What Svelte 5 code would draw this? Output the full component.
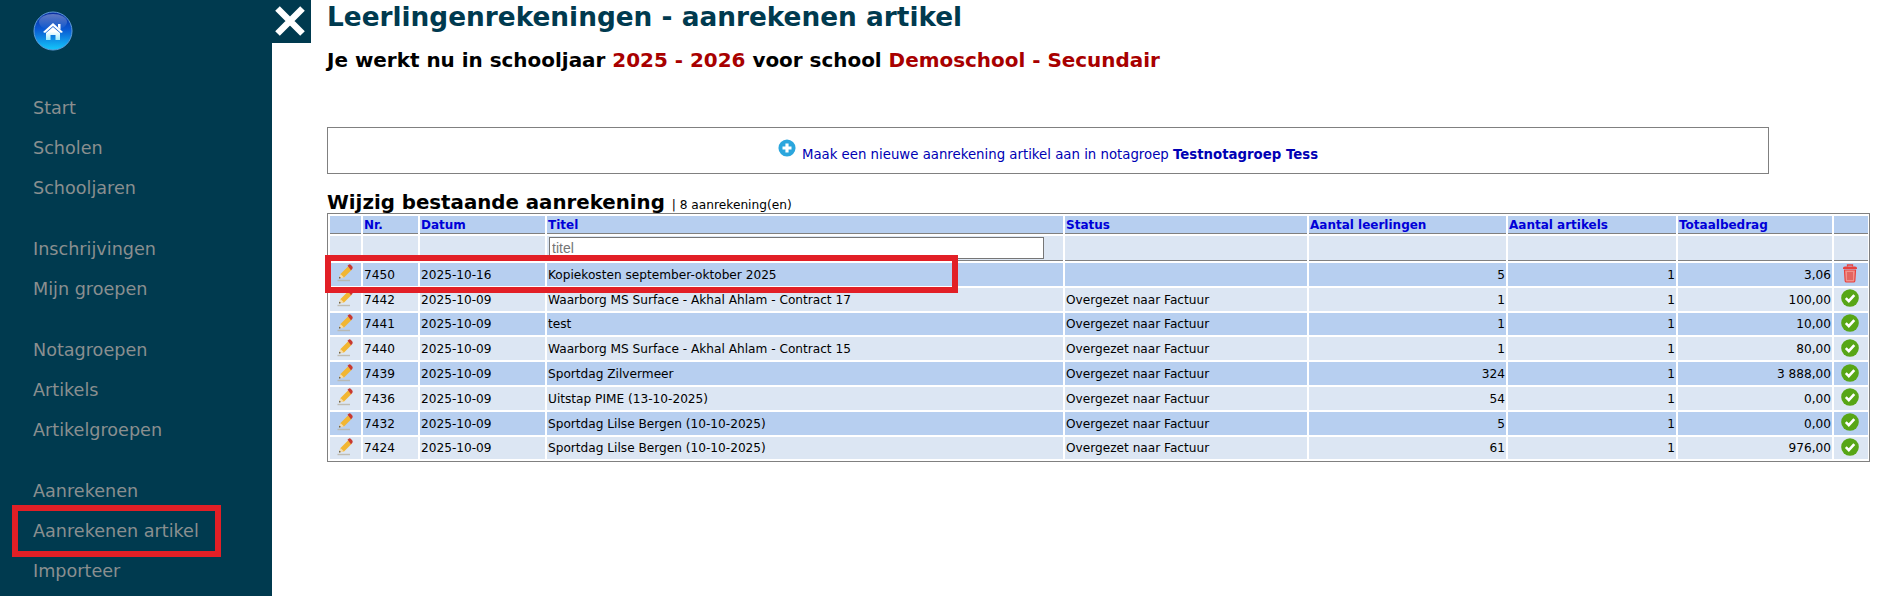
<script>
  const menu = [
    ['Start', 'Scholen', 'Schooljaren'],
    ['Inschrijvingen', 'Mijn groepen'],
    ['Notagroepen', 'Artikels', 'Artikelgroepen'],
    ['Aanrekenen', 'Aanrekenen artikel', 'Importeer']
  ];
  const columns = ['', 'Nr.', 'Datum', 'Titel', 'Status', 'Aantal leerlingen', 'Aantal artikels', 'Totaalbedrag', ''];
  const done = 'Overgezet naar Factuur';
  const rows = [
    ['7450', '2025-10-16', 'Kopiekosten september-oktober 2025', '', '5', '1', '3,06', 'del'],
    ['7442', '2025-10-09', 'Waarborg MS Surface - Akhal Ahlam - Contract 17', done, '1', '1', '100,00', 'ok'],
    ['7441', '2025-10-09', 'test', done, '1', '1', '10,00', 'ok'],
    ['7440', '2025-10-09', 'Waarborg MS Surface - Akhal Ahlam - Contract 15', done, '1', '1', '80,00', 'ok'],
    ['7439', '2025-10-09', 'Sportdag Zilvermeer', done, '324', '1', '3 888,00', 'ok'],
    ['7436', '2025-10-09', 'Uitstap PIME (13-10-2025)', done, '54', '1', '0,00', 'ok'],
    ['7432', '2025-10-09', 'Sportdag Lilse Bergen (10-10-2025)', done, '5', '1', '0,00', 'ok'],
    ['7424', '2025-10-09', 'Sportdag Lilse Bergen (10-10-2025)', done, '61', '1', '976,00', 'ok']
  ];
</script>

<div class="page">
  <nav class="side">
    <svg class="home" viewBox="0 0 40 40" width="40" height="40" aria-hidden="true">
      <defs>
        <linearGradient id="orb" x1="0" y1="0" x2="0" y2="1">
          <stop offset="0" stop-color="#0b2c9c" />
          <stop offset="0.45" stop-color="#0a58d2" />
          <stop offset="1" stop-color="#14c8fb" />
        </linearGradient>
        <linearGradient id="gloss" x1="0" y1="0" x2="0" y2="1">
          <stop offset="0" stop-color="#fff" stop-opacity=".35" />
          <stop offset="1" stop-color="#fff" stop-opacity="0" />
        </linearGradient>
        <linearGradient id="hs" x1="0" y1="0" x2="0" y2="1">
          <stop offset="0.5" stop-color="#fff" />
          <stop offset="1" stop-color="#9ceafc" />
        </linearGradient>
      </defs>
      <circle cx="20" cy="20" r="19" fill="url(#orb)" stroke="#5f9cdc" stroke-width="1" />
      <ellipse cx="20" cy="11" rx="14" ry="8" fill="url(#gloss)" />
      <path d="M20 12 L30 21 L28 22 L20 15 L12 22 L10 21 Z M25 13 h2.500 v5.500 l-2.500 -2.200 Z M13 22 L20 16 L27 22 V29 H22.500 V24 H17.500 V29 H13 Z" fill="url(#hs)" />
    </svg>
    {#each menu as group}
      <ul>
        {#each group as item}
          <li>{item}</li>
        {/each}
      </ul>
    {/each}
    <div class="mark side-mark"></div>
  </nav>

  <div class="close">
    <svg viewBox="0 0 39 43" width="39" height="43" aria-hidden="true">
      <path d="M5.500 8.500 L30.500 33.500 M30.500 8.500 L5.500 33.500" stroke="#fff" stroke-width="6.500" fill="none" />
    </svg>
  </div>

  <main>
    <h1>Leerlingenrekeningen - aanrekenen artikel</h1>
    <h2>Je werkt nu in schooljaar <em>2025 - 2026</em> voor school <em>Demoschool - Secundair</em></h2>

    <div class="newbox">
      <svg class="plus" viewBox="0 0 20 20" width="18" height="18" aria-hidden="true">
        <circle cx="10" cy="10" r="9.500" fill="#2ba6dd" />
        <path d="M10 5 V15 M5 10 H15" stroke="#fff" stroke-width="3.500" />
      </svg>
      <a href="#new">Maak een nieuwe aanrekening artikel aan in notagroep <b>Testnotagroep Tess</b></a>
    </div>

    <h3>Wijzig bestaande aanrekening <small>| 8 aanrekening(en)</small></h3>

    <div class="tablewrap">
      <table>
        <colgroup>
          <col class="c0" /><col class="c1" /><col class="c2" /><col class="c3" /><col class="c4" />
          <col class="c5" /><col class="c6" /><col class="c7" /><col class="c8" />
        </colgroup>
        <thead>
          <tr>
            {#each columns as c}<th>{c}</th>{/each}
          </tr>
          <tr class="filter">
            <td></td><td></td><td></td>
            <td><input placeholder="titel" /></td>
            <td></td><td></td><td></td><td></td><td></td>
          </tr>
        </thead>
        <tbody>
          {#each rows as r, i}
            <tr class:odd={i % 2 === 0}>
              <td class="ic">
                <svg viewBox="0 0 20 20" width="20" height="20" aria-hidden="true">
                  <path d="M2.500 17.500 H15" stroke="#b9b4a4" stroke-width="1.400" opacity=".8" />
                  <path d="M4 15.500 L5.500 11 L13 3.500 L16.500 7 L9 14.500 Z" fill="#f2b632" />
                  <path d="M12.500 2.800 L14 1.500 Q15 1 16 2 L17.500 3.800 Q18 5 17.200 6 L16 7.300 Z" fill="#c8392f" />
                  <path d="M4 15.500 L5.500 11 L9 14.500 Z" fill="#f3dcb0" />
                  <path d="M4 15.500 L4.500 13.800 L5.900 15 Z" fill="#333" />
                </svg>
              </td>
              <td>{r[0]}</td>
              <td>{r[1]}</td>
              <td>{r[2]}</td>
              <td>{r[3]}</td>
              <td class="num">{r[4]}</td>
              <td class="num">{r[5]}</td>
              <td class="num">{r[6]}</td>
              <td class="ic act">
                {#if r[7] === 'del'}
                  <svg viewBox="0 0 20 20" width="20" height="20" aria-hidden="true">
                    <path d="M7.500 3.500 V2 H12.500 V3.500" fill="none" stroke="#e8403c" stroke-width="1.300" />
                    <path d="M3 5 Q3 3.500 5 3.500 H15 Q17 3.500 17 5 V6 H3 Z" fill="#e8403c" />
                    <path d="M4.500 7 H15.500 L14.800 18 Q14.700 19 13.500 19 H6.500 Q5.300 19 5.200 18 Z" fill="#f0918c" stroke="#e8403c" stroke-width="1.200" />
                    <path d="M8 9 V17 M10 9 V17 M12 9 V17" stroke="#d63a36" stroke-width="1" />
                  </svg>
                {:else}
                  <svg viewBox="0 0 20 20" width="20" height="20" aria-hidden="true">
                    <circle cx="10" cy="10" r="8.800" fill="#57a616" />
                    <path d="M5.800 10.200 L8.800 13.200 L14.300 7.200" fill="none" stroke="#fff" stroke-width="2.600" />
                  </svg>
                {/if}
              </td>
            </tr>
          {/each}
        </tbody>
      </table>
    </div>
    <div class="mark row-mark"></div>
  </main>
</div>

<style>
  :global(body) {
    margin: 0;
    background: #fff;
    font-family: "DejaVu Sans", Verdana, sans-serif;
  }
  .page {
    display: flex;
    height: 596px;
    overflow: hidden;
    position: relative;
  }
  .side {
    width: 272px;
    flex: none;
    background: #003a4f;
    box-sizing: border-box;
    padding: 11px 0 0 33px;
    position: relative;
  }
  .home {
    display: block;
    margin-bottom: 37px;
  }
  ul {
    list-style: none;
    margin: 0 0 21px;
    padding: 0;
  }
  li {
    height: 40px;
    line-height: 40px;
    color: #8a8f8f;
    font-size: 17.600px;
  }
  .close {
    position: absolute;
    left: 272px;
    top: 0;
    width: 39px;
    height: 43px;
    background: #003a4f;
  }
  .close svg { display: block; }
  main {
    flex: 1;
    padding-left: 55px;
    position: relative;
    min-width: 0;
  }
  h1 {
    margin: 0;
    color: #003a4f;
    font-size: 26.350px;
    line-height: 35px;
    font-weight: bold;
  }
  h2 {
    margin: 11px 0 0;
    color: #000;
    font-size: 19.950px;
    line-height: 28px;
    font-weight: bold;
  }
  em {
    font-style: normal;
    color: #a80000;
  }
  .newbox {
    width: 1442px;
    height: 47px;
    box-sizing: border-box;
    margin-top: 53px;
    border: 1px solid #808080;
    display: flex;
    justify-content: center;
    align-items: center;
    font-size: 13.300px;
  }
  .plus { margin: -6px 6px 0 0; }
  .newbox a {
    color: #0000b4;
    text-decoration: none;
    margin-top: 8px;
  }
  h3 {
    margin: 15px 0 0;
    font-size: 19.800px;
    line-height: 27px;
    height: 24px;
    color: #000;
  }
  h3 small {
    font-size: 12.200px;
    font-weight: normal;
  }
  .tablewrap {
    width: 1543px;
    box-sizing: border-box;
    border: 1px solid #808080;
  }
  table {
    width: 100%;
    table-layout: fixed;
    border-collapse: separate;
    border-spacing: 2px;
    font-size: 12px;
    color: #000;
  }
  tbody { font-size: 12.150px; }
  .c0 { width: 31px; }
  .c1 { width: 55px; }
  .c2 { width: 125px; }
  .c3 { width: 516px; }
  .c4 { width: 242px; }
  .c5 { width: 197px; }
  .c6 { width: 168px; }
  .c7 { width: 154px; }
  .c8 { width: 34px; }
  th, td {
    padding: 1px 2px 0 1px;
    height: 22.800px;
    background: #dce6f3;
    overflow: hidden;
    white-space: nowrap;
    box-sizing: border-box;
  }
  th {
    padding-top: 0;
    height: 18px;
    background: #b7cff0;
    color: #0000d8;
    text-align: left;
    border-bottom: 1px solid #808080;
  }
  .filter td {
    padding-top: 0;
    height: 25px;
    border-bottom: 1px solid #808080;
  }
  tbody tr.odd td { background: #b7cff0; }
  td.num {
    text-align: right;
    padding-right: 1px;
  }
  td.ic {
    padding: 0 0 0 5px;
    line-height: 0;
  }
  td.ic svg {
    display: block;
    margin-top: -2px;
  }
  td.act { padding-left: 6px; }
  input {
    display: block;
    width: 495px;
    height: 22px;
    box-sizing: border-box;
    padding: 0 2px;
    margin: 0 0 0 1px;
    border: 1px solid #767676;
    background: #fff;
    font-family: "Liberation Sans", Arial, sans-serif;
    font-size: 14px;
    color: #000;
  }
  input::placeholder { color: #757575; }
  .mark {
    position: absolute;
    box-sizing: border-box;
    border: 6px solid #e21f26;
    pointer-events: none;
  }
  .side-mark {
    left: 12px;
    top: 505px;
    width: 209px;
    height: 52px;
  }
  .row-mark {
    left: 53px;
    top: 255px;
    width: 633px;
    height: 38px;
  }
</style>
